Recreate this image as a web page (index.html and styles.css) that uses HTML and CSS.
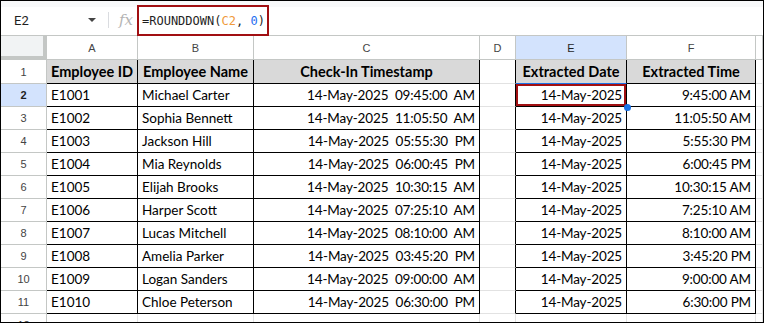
FILE: index.html
```html
<!DOCTYPE html>
<html lang="en">
<head>
    <meta charset="UTF-8">
    <title>Extracted Date and Time</title>
    <link rel="stylesheet" href="styles.css">
</head>
<body>
    <div class="frame">
        <div class="toolbar">
            <div class="name-box">
                <span>E2</span>
                <span class="caret"></span>
            </div>
            <div class="divider"></div>
            <div class="fx">fx</div>
            <div class="formula">=ROUNDDOWN(<span class="ref">C2</span>, <span class="num">0</span>)</div>
        </div>

        <table class="sheet">
            <colgroup>
                <col style="width: 46px">
                <col style="width: 91px">
                <col style="width: 116px">
                <col style="width: 226px">
                <col style="width: 36px">
                <col style="width: 111px">
                <col style="width: 129px">
                <col style="width: 7px">
            </colgroup>
            <tr class="col-head">
                <td class="corner"></td>
                <td class="ch">A</td>
                <td class="ch">B</td>
                <td class="ch">C</td>
                <td class="ch">D</td>
                <td class="ch active">E</td>
                <td class="ch">F</td>
                <td class="ch"></td>
            </tr>
            <tr class="row-first">
                <td class="rh">1</td>
                <td class="b hd">Employee ID</td>
                <td class="b hd">Employee Name</td>
                <td class="b hd">Check-In Timestamp</td>
                <td class="d"></td>
                <td class="b hd sel-top">Extracted Date</td>
                <td class="b hd">Extracted Time</td>
                <td></td>
            </tr>
        </table>
    </div>

<script>
    const rows = [
        ['E1001', 'Michael Carter', '09:45:00  AM', '9:45:00 AM'],
        ['E1002', 'Sophia Bennett', '11:05:50  AM', '11:05:50 AM'],
        ['E1003', 'Jackson Hill', '05:55:30  PM', '5:55:30 PM'],
        ['E1004', 'Mia Reynolds', '06:00:45  PM', '6:00:45 PM'],
        ['E1005', 'Elijah Brooks', '10:30:15  AM', '10:30:15 AM'],
        ['E1006', 'Harper Scott', '07:25:10  AM', '7:25:10 AM'],
        ['E1007', 'Lucas Mitchell', '08:10:00  AM', '8:10:00 AM'],
        ['E1008', 'Amelia Parker', '03:45:20  PM', '3:45:20 PM'],
        ['E1009', 'Logan Sanders', '09:00:00  AM', '9:00:00 AM'],
        ['E1010', 'Chloe Peterson', '06:30:00  PM', '6:30:00 PM']
    ];

    const sheet = document.querySelector('.sheet');

    rows.forEach((r, i) => {
        const tr = document.createElement('tr');
        const n = i + 2;
        tr.innerHTML =
            `<td class="rh${n === 2 ? ' active' : ''}">${n}</td>` +
            `<td class="b">${r[0]}</td>` +
            `<td class="b">${r[1]}</td>` +
            `<td class="b num">14-May-2025  ${r[2]}</td>` +
            `<td class="d"></td>` +
            `<td class="b num${n === 2 ? ' selected' : ''}">14-May-2025</td>` +
            `<td class="b num">${r[3]}</td>` +
            `<td></td>`;
        sheet.appendChild(tr);
    });

    const last = document.createElement('tr');
    last.innerHTML = '<td class="rh">12</td><td></td><td></td><td></td><td></td><td></td><td></td><td></td>';
    sheet.appendChild(last);
</script>
</body>
</html>
```

FILE: styles.css
```css
body {
    margin: 0;
    background: #fff;
}

.frame {
    width: 764px;
    height: 323px;
    box-sizing: border-box;
    border: 1px solid #000;
    overflow: hidden;
    background: #fff;
}

.toolbar {
    height: 35px;
    padding-top: 4px;
    box-sizing: border-box;
    display: flex;
    align-items: stretch;
    background: linear-gradient(#f8f9fa 0 6px, #fff 6px);
    border-bottom: 1px solid #c4c7c5;
    font-family: Roboto, "Liberation Sans", sans-serif;
}

.name-box {
    width: 82px;
    margin-left: 13px;
    display: flex;
    align-items: center;
    justify-content: space-between;
    font-size: 13px;
    color: #1f1f1f;
}

.caret {
    width: 0;
    height: 0;
    border-left: 4px solid transparent;
    border-right: 4px solid transparent;
    border-top: 4px solid #444;
}

.divider {
    width: 1px;
    height: 16px;
    align-self: center;
    margin-left: 12px;
    background: #dadce0;
}

.fx {
    margin-left: 10px;
    width: 18px;
    align-self: center;
    font-family: "DejaVu Serif", serif;
    font-style: italic;
    font-size: 15px;
    color: #b4b4b4;
}

.formula {
    width: 132px;
    height: 31px;
    box-sizing: border-box;
    border: 2px solid #a10f12;
    padding-left: 3px;
    display: flex;
    align-items: center;
    white-space: pre;
    font-family: "DejaVu Sans Mono", monospace;
    font-size: 12px;
    color: #1f1f1f;
}

.formula .ref { color: #f09a3a; }
.formula .num { color: #1f6ef0; }

.sheet {
    table-layout: fixed;
    width: 762px;
    border-collapse: separate;
    border-spacing: 0;
    font-family: Lato, "Liberation Sans", sans-serif;
    font-size: 13.5px;
    color: #000;
}

.sheet tr {
    height: 23px;
}

.sheet tr.col-head,
.sheet tr.row-first {
    height: 24px;
}

.sheet td {
    padding: 0 4px;
    line-height: 16px;
    border-right: 1px solid #e2e2e2;
    border-bottom: 1px solid #e2e2e2;
    white-space: pre;
    overflow: hidden;
}

.sheet .ch,
.sheet .rh {
    padding: 0;
    text-align: center;
    font-family: "Liberation Sans", Arial, sans-serif;
    font-size: 11px;
    color: #444;
    border-color: #c4c7c5;
}

.sheet .corner {
    padding: 0;
    background: #f1f3f4;
    border-right: 4px solid #c4c7c5;
    border-bottom: 4px solid #c4c7c5;
}

.sheet .active {
    background: #d3e3fd;
    color: #1f1f1f;
}

.sheet .rh.active {
    font-weight: bold;
}

.sheet .b {
    border-right-color: #000;
    border-bottom-color: #000;
}

.sheet .d {
    border-right-color: #000;
}

.sheet .hd {
    background: #d9d9d9;
    font-weight: bold;
    font-size: 14.5px;
    text-align: center;
}

.sheet .num {
    text-align: right;
    letter-spacing: -0.15px;
}

.sheet .sel-top {
    border-bottom-color: #1a73e8;
}

.sheet .selected {
    position: relative;
    overflow: visible;
}

.sheet .selected::after {
    content: "";
    position: absolute;
    top: 0;
    left: 0;
    right: 0;
    bottom: 0;
    border: 2px solid #a10f12;
}

.sheet .selected::before {
    content: "";
    position: absolute;
    right: -5px;
    bottom: -5px;
    width: 7px;
    height: 7px;
    border-radius: 50%;
    background: #1a73e8;
    z-index: 2;
}
```
